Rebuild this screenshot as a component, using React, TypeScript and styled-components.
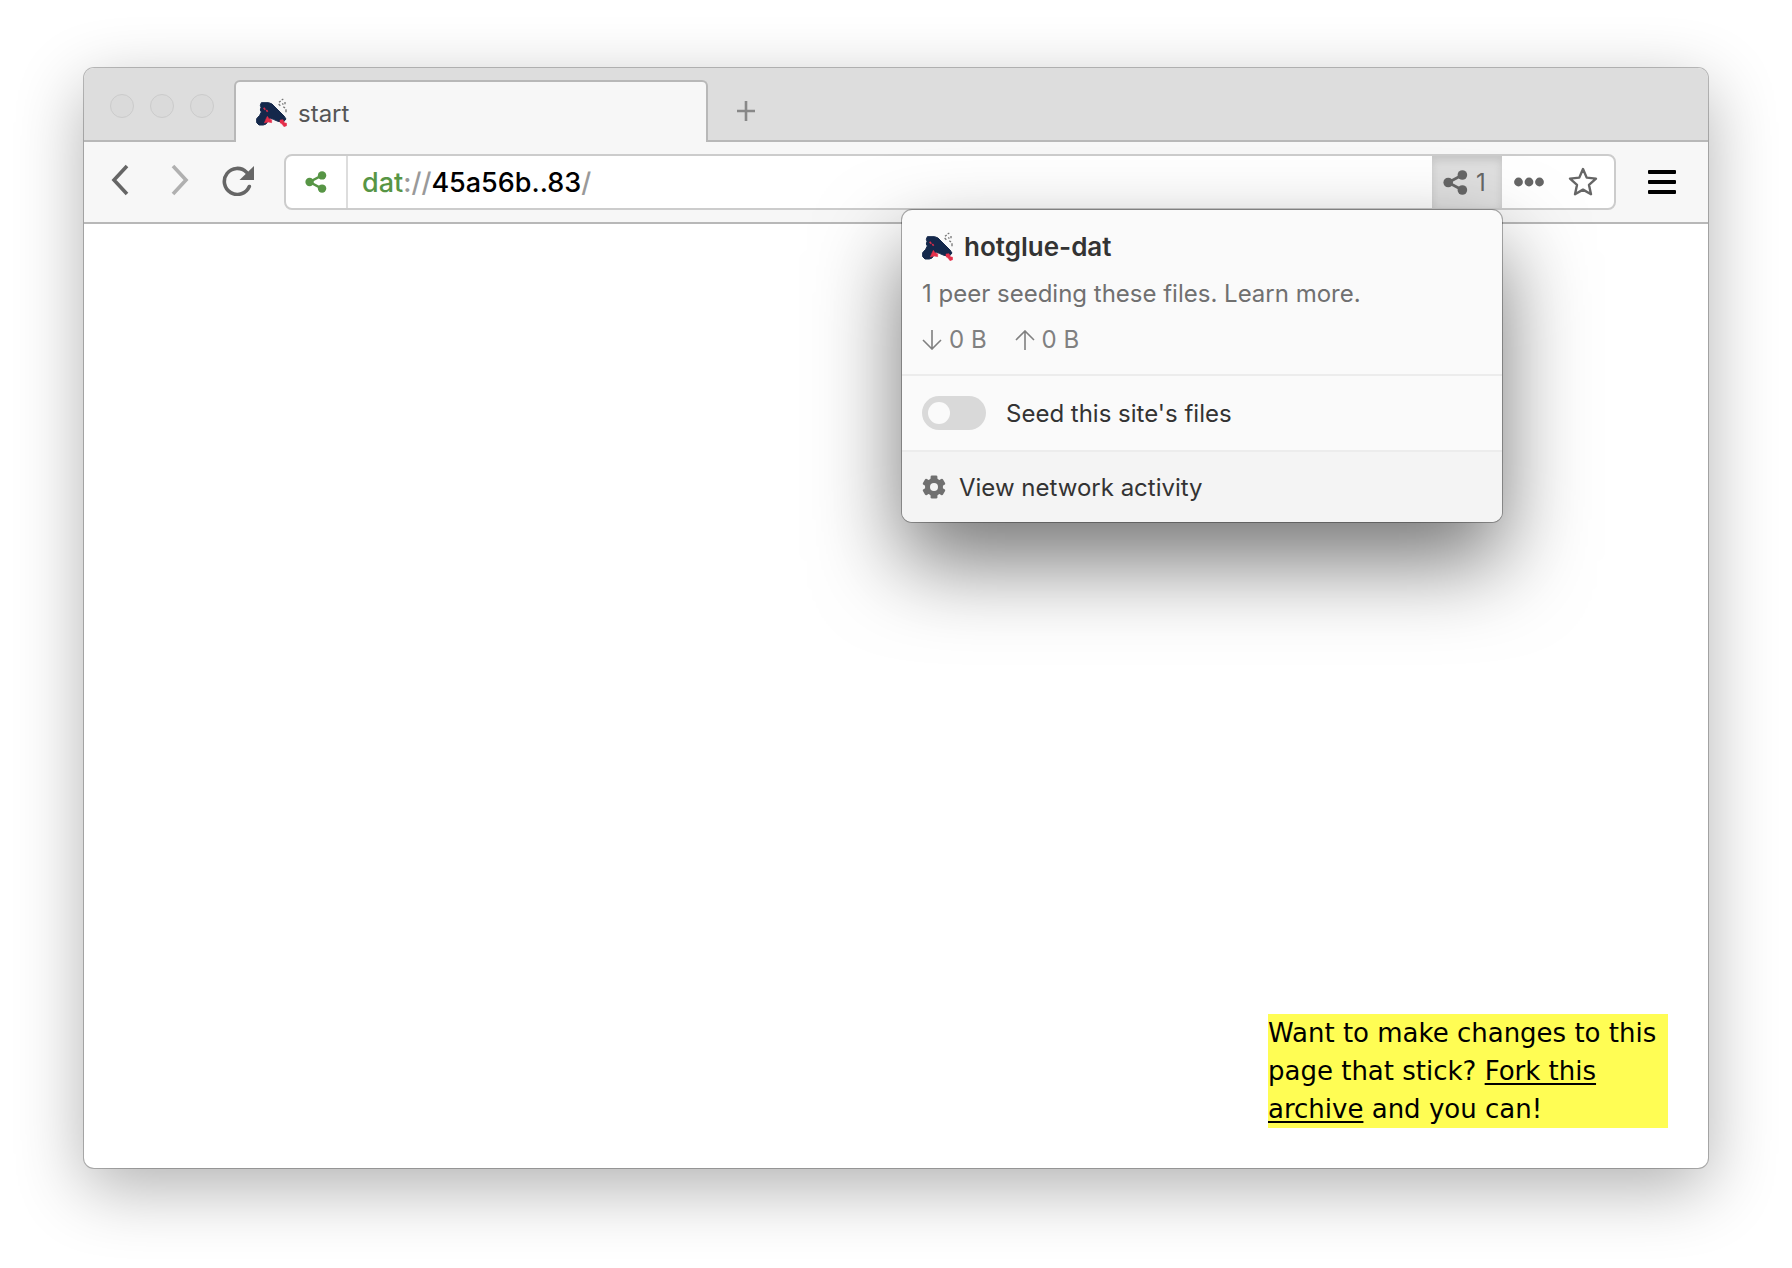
import React, { useState } from 'react';
import styled, { createGlobalStyle } from 'styled-components';

const GlobalStyle = createGlobalStyle`
  *, *::before, *::after { box-sizing: border-box; }
  body {
    margin: 0;
    background: #fff;
    font-family: Inter, "Liberation Sans", sans-serif;
    font-size: 24px;
    color: #333;
  }
  button, input { font: inherit; color: inherit; }
  svg { display: block; flex: none; }
`;

const Desktop = styled.main`
  display: flex;
  min-height: 100vh;
  padding: 68px 84px 100px;
`;

const BrowserWindow = styled.div`
  flex: 1;
  min-width: 0;
  display: flex;
  flex-direction: column;
  border-radius: 10px;
  background: #fff;
  box-shadow: 0 0 0 1px rgba(0, 0, 0, 0.25), 0 20px 68px rgba(0, 0, 0, 0.31);
`;

const TabStrip = styled.header`
  display: flex;
  height: 74px;
  padding-top: 12px;
  border-radius: 10px 10px 0 0;
  background: #ddd;
  box-shadow: inset 0 -2px #b8b8b8;
`;

const TrafficLights = styled.div`
  display: flex;
  gap: 16px;
  width: 150px;
  padding: 14px 0 0 26px;
`;

const Light = styled.button`
  width: 24px;
  height: 24px;
  padding: 0;
  border: 1px solid #cbcbcb;
  border-radius: 50%;
  background: #dadada;
`;

const Tab = styled.div`
  display: flex;
  align-items: center;
  gap: 11px;
  width: 474px;
  padding: 2px 20px 0;
  border: 2px solid #b8b8b8;
  border-bottom: 0;
  border-radius: 6px 6px 0 0;
  background: #f7f7f7;
  color: #555;
`;

const NewTab = styled.button`
  display: flex;
  padding: 21px 28px;
  border: 0;
  background: none;
`;

const Toolbar = styled.nav`
  display: flex;
  align-items: center;
  height: 82px;
  padding: 12px 0;
  border-bottom: 2px solid #b8b8b8;
  background: #f7f7f7;
`;

const IconButton = styled.button<{ $width: number }>`
  display: flex;
  align-items: center;
  justify-content: center;
  width: ${(p) => p.$width}px;
  height: 52px;
  padding: 0;
  border: 0;
  background: none;
`;

const Navigation = styled.div`
  display: flex;
  width: 200px;
  padding: 0 0 4px 6px;
`;

const LocationBar = styled.div`
  flex: 1;
  min-width: 0;
  display: flex;
  height: 56px;
  padding-right: 4px;
  border: 2px solid #ccc;
  border-radius: 8px;
  background: #fff;
`;

const SiteInfo = styled.button`
  display: flex;
  align-items: center;
  justify-content: center;
  width: 62px;
  padding: 0;
  border: 0;
  border-right: 2px solid #ddd;
  background: none;
`;

const Address = styled.div`
  flex: 1;
  display: grid;
  align-items: center;
  font-size: 27px;
  font-weight: 500;
  color: #000;

  > * { grid-area: 1 / 1; }
`;

const AddressInput = styled.input`
  width: 100%;
  height: 52px;
  padding: 0 14px;
  border: 0;
  outline: 0;
  background: none;
`;

const AddressText = styled.label`
  padding-left: 14px;
  white-space: nowrap;
`;

const Scheme = styled.span`
  color: #579545;
`;

const Muted = styled.span`
  color: #999;
`;

const PeersAnchor = styled.div`
  position: relative;
  display: flex;
`;

const PeersButton = styled.button`
  display: flex;
  align-items: center;
  gap: 8px;
  width: 70px;
  padding: 0 0 0 11px;
  border: 0;
  background: #dfdfdf;
  box-shadow: inset 0 4px 8px rgba(0, 0, 0, 0.12);
  color: #666;
`;

const Popup = styled.section`
  position: absolute;
  z-index: 1;
  top: 54px;
  right: 0;
  width: 600px;
  border-radius: 10px;
  background: #fafafa;
  box-shadow: 0 0 0 1px rgba(0, 0, 0, 0.3), 0 40px 86px rgba(0, 0, 0, 0.54);
`;

const PopupHeader = styled.div`
  display: flex;
  flex-direction: column;
  gap: 14px;
  padding: 20px 20px 18px;
  color: #707070;
  line-height: 32px;
`;

const SiteTitle = styled.h1`
  display: flex;
  align-items: center;
  gap: 11px;
  margin: 0;
  font-size: 26px;
  font-weight: 600;
  line-height: 34px;
  color: #333;
`;

const Summary = styled.p`
  margin: 0;
`;

const SummaryLink = styled.a`
  color: inherit;
  text-decoration: none;
`;

const Transfers = styled.div`
  display: flex;
  gap: 28px;
  color: #808080;
`;

const Transfer = styled.span`
  display: flex;
  align-items: center;
  gap: 7px;
`;

const SeedRow = styled.label`
  display: flex;
  align-items: center;
  gap: 20px;
  height: 78px;
  padding: 0 20px;
  border: solid #ececec;
  border-width: 2px 0;
`;

const Toggle = styled.input`
  appearance: none;
  width: 64px;
  height: 34px;
  margin: 0;
  padding: 6px;
  border-radius: 17px;
  background: #d9d9d9;

  &::before {
    content: "";
    display: block;
    width: 22px;
    height: 22px;
    border-radius: 50%;
    background: #fafafa;
  }

  &:checked { background: #579545; }
  &:checked::before { margin-left: 30px; }
`;

const NetworkLink = styled.a`
  display: flex;
  align-items: center;
  gap: 13px;
  height: 70px;
  padding: 0 20px;
  border-radius: 0 0 10px 10px;
  background: #f4f4f4;
  color: inherit;
  text-decoration: none;
`;

const Page = styled.article`
  flex: 1;
  display: flex;
  align-items: flex-end;
  justify-content: flex-end;
  padding: 40px;
`;

const Note = styled.p`
  width: 400px;
  margin: 0;
  background: #fffd54;
  color: #000;
  font: 26px/38px "DejaVu Sans", Verdana, sans-serif;
`;

const NoteLink = styled.a`
  color: inherit;
  text-decoration-thickness: 2px;
  text-underline-offset: 3px;
`;

const Favicon = () => (
  <svg width="31" height="30" viewBox="0 0 93 90" aria-hidden="true">
    <path d="M16 14h22l10 4 36 36 6 9-8 9-16-2-14-6-10-4-12 18-8 3H9l-7-7V62l9-10 5-10-3-6 2-8-2-6z" fill="#14284b" stroke="#14284b" strokeWidth="3" strokeLinejoin="round" />
    <path d="M34 55l5 7 8 3v9l-11-2-11 3 4-10zM72 66l9-1 4 9 7 2v7l-8 3-6-8-6-4z" fill="#e52f4a" stroke="#e52f4a" strokeWidth="1.5" />
    <path d="M23 29l5 6M31 36l4 5" stroke="#d62c4a" strokeWidth="5" fill="none" />
    <path d="M82 3l-5 3M74 9l-5 4M68 18l5 5M79 16l3 4M87 12v7M82 26l5 4M90 34v9" stroke="#777" strokeWidth="4" fill="none" />
  </svg>
);

const Share = ({ size, color }: { size: number; color: string }) => (
  <svg width={size} height={size} viewBox="0 0 24 24" fill={color} aria-hidden="true">
    <path d="M19 4.5L5 12l14 7.5" fill="none" stroke={color} strokeWidth="2.6" />
    <circle cx="5" cy="12" r="4.6" />
    <circle cx="18.6" cy="4.8" r="4.6" />
    <circle cx="18.6" cy="19.2" r="4.6" />
  </svg>
);

const Chevron = ({ forward }: { forward?: boolean }) => (
  <svg width="18" height="32" viewBox="0 0 18 32" fill="none" stroke={forward ? '#b0b0b0' : '#666'} strokeWidth="3.6" aria-hidden="true">
    <path d={forward ? 'M2 2L15 16 2 30' : 'M16 2L3 16l13 14'} />
  </svg>
);

const Reload = () => (
  <svg width="32" height="32" viewBox="0 -1 32 32" aria-hidden="true">
    <path d="M27.3 21.5A13 13 0 1 1 24.5 7.2" fill="none" stroke="#666" strokeWidth="3.6" strokeLinecap="round" />
    <path d="M32 1v14H17.5z" fill="#666" />
  </svg>
);

const Plus = () => (
  <svg width="20" height="20" viewBox="0 0 20 20" stroke="#888" strokeWidth="2.6" aria-hidden="true">
    <path d="M10 0v20M1 10h18" />
  </svg>
);

const Dots = () => (
  <svg width="30" height="10" viewBox="0 0 30 10" fill="#666" aria-hidden="true">
    <circle cx="4.5" cy="5" r="4.4" />
    <circle cx="15" cy="5" r="4.4" />
    <circle cx="25.5" cy="5" r="4.4" />
  </svg>
);

const Star = () => (
  <svg width="30" height="30" viewBox="0 0 30 30" fill="none" stroke="#666" strokeWidth="2.4" strokeLinejoin="round" aria-hidden="true">
    <path d="M15 2l3.7 8.600 9.300 1-7 6.300 2 9.300L15 22.600l-8 4.600 2-9.300-7-6.300 9.300-1z" />
  </svg>
);

const Menu = () => (
  <svg width="28" height="24" viewBox="0 0 28 24" aria-hidden="true">
    <rect width="28" height="4" rx="1" />
    <rect y="10" width="28" height="4" rx="1" />
    <rect y="20" width="28" height="4" rx="1" />
  </svg>
);

const Arrow = ({ up }: { up?: boolean }) => (
  <svg width="20" height="20" viewBox="0 0 20 20" fill="none" stroke="#808080" strokeWidth="1.6" aria-hidden="true">
    <path d={up ? 'M10 20V1M1 10l9-9 9 9' : 'M10 0v19M1 10l9 9 9-9'} />
  </svg>
);

const Gear = () => (
  <svg width="24" height="24" viewBox="0 0 24 24" aria-hidden="true">
    <g fill="#707070">
      {[0, 60, 120].map((angle) => (
        <rect key={angle} x="8.6" y="0.4" width="6.8" height="23.2" rx="1.4" transform={`rotate(${angle} 12 12)`} />
      ))}
      <circle cx="12" cy="12" r="9" />
    </g>
    <circle cx="12" cy="12" r="4" fill="#f4f4f4" />
  </svg>
);

export default function App() {
  const [seeding, setSeeding] = useState(false);
  return (
    <>
      <GlobalStyle />
      <Desktop>
        <BrowserWindow>
          <TabStrip>
            <TrafficLights>
              <Light aria-label="Close" />
              <Light aria-label="Minimize" />
              <Light aria-label="Zoom" />
            </TrafficLights>
            <Tab>
              <Favicon />
              <span>start</span>
            </Tab>
            <NewTab aria-label="New tab"><Plus /></NewTab>
          </TabStrip>
          <Toolbar>
            <Navigation>
              <IconButton $width={60} aria-label="Back"><Chevron /></IconButton>
              <IconButton $width={60} aria-label="Forward"><Chevron forward /></IconButton>
              <IconButton $width={56} aria-label="Reload"><Reload /></IconButton>
            </Navigation>
            <LocationBar>
              <SiteInfo aria-label="Site information"><Share size={22} color="#579545" /></SiteInfo>
              <Address>
                <AddressInput id="address" type="text" />
                <AddressText htmlFor="address">
                  <Scheme>dat</Scheme><Muted>://</Muted>45a56b..83<Muted>/</Muted>
                </AddressText>
              </Address>
              <PeersAnchor>
                <PeersButton aria-expanded="true"><Share size={25} color="#666" />1</PeersButton>
                <Popup>
                  <PopupHeader>
                    <SiteTitle><Favicon />hotglue-dat</SiteTitle>
                    <Summary>
                      1 peer seeding these files. <SummaryLink href="#learn">Learn more.</SummaryLink>
                    </Summary>
                    <Transfers>
                      <Transfer><Arrow />0 B</Transfer>
                      <Transfer><Arrow up />0 B</Transfer>
                    </Transfers>
                  </PopupHeader>
                  <SeedRow>
                    <Toggle type="checkbox" checked={seeding} onChange={() => setSeeding(!seeding)} />
                    Seed this site's files
                  </SeedRow>
                  <NetworkLink href="#network"><Gear />View network activity</NetworkLink>
                </Popup>
              </PeersAnchor>
              <IconButton $width={54} aria-label="More"><Dots /></IconButton>
              <IconButton $width={54} aria-label="Bookmark"><Star /></IconButton>
            </LocationBar>
            <IconButton $width={92} aria-label="Menu"><Menu /></IconButton>
          </Toolbar>
          <Page>
            <Note>
              Want to make changes to this page that stick? <NoteLink href="#fork">Fork this archive</NoteLink> and you can!
            </Note>
          </Page>
        </BrowserWindow>
      </Desktop>
    </>
  );
}
